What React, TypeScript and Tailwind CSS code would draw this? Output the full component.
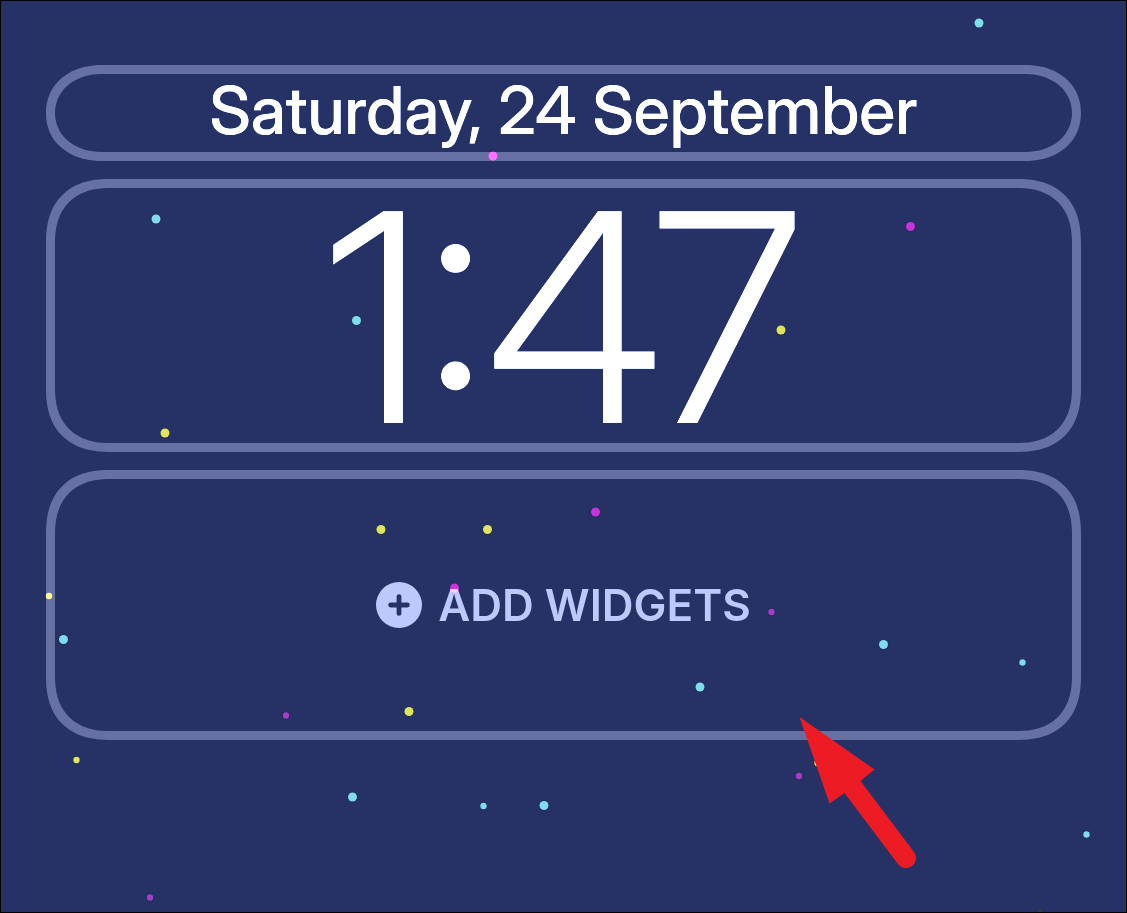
const CYAN = "#7fdcec";
const YELLOW = "#dfe45c";
const MAGENTA = "#c634da";
const PURPLE = "#a63ccb";

type Speck = [x: number, y: number, r: number, fill: string];

const specks: Speck[] = [
  [979, 23, 4.5, CYAN],
  [156, 219, 4.5, CYAN],
  [356.5, 320.5, 4.5, CYAN],
  [63.5, 639.5, 4.5, CYAN],
  [700, 687, 4.5, CYAN],
  [883.5, 644.5, 4.5, CYAN],
  [352.5, 797, 4.5, CYAN],
  [544, 805.5, 4.5, CYAN],
  [1022.5, 662.5, 3.2, CYAN],
  [483.5, 806, 3.2, CYAN],
  [1086.5, 834.5, 3.2, CYAN],
  [781, 330, 4.5, YELLOW],
  [165, 433, 4.5, YELLOW],
  [381, 529.5, 4.5, YELLOW],
  [487.5, 529.5, 4.5, YELLOW],
  [409, 711.5, 4.5, YELLOW],
  [49, 596, 3.2, YELLOW],
  [76.5, 760, 3.2, YELLOW],
  [817.5, 763, 3.2, YELLOW],
  [493, 156, 4.5, MAGENTA],
  [910.5, 226.5, 4.5, MAGENTA],
  [595.5, 512, 4.5, MAGENTA],
  [454.5, 588, 4.5, MAGENTA],
  [771.5, 612, 3.2, PURPLE],
  [286, 715.5, 3.2, PURPLE],
  [799, 776, 3.2, PURPLE],
  [150, 897.5, 3.2, PURPLE],
];

function Specks() {
  return (
    <svg
      className="pointer-events-none absolute -left-px -top-px h-full w-full overflow-visible"
      aria-hidden="true"
    >
      {specks.map(([x, y, r, fill]) => (
        <g key={`${x}-${y}`}>
          <circle cx={x} cy={y} r={r + 0.8} fill="#1c2640" opacity="0.5" />
          <circle cx={x} cy={y} r={r} fill={fill} />
        </g>
      ))}
      <circle cx="1040" cy="912" r="3" fill="#2c3d55" />
    </svg>
  );
}

function PlusBadge() {
  return (
    <svg className="size-[46px] shrink-0" viewBox="0 0 46 46" fill="currentColor" aria-hidden="true">
      <path
        fillRule="evenodd"
        d="M23 0a23 23 0 1 1 0 46a23 23 0 1 1 0-46ZM23 12.2a2.4 2.4 0 0 0-2.4 2.4v6H14.6a2.4 2.4 0 0 0 0 4.8h6v6a2.4 2.4 0 0 0 4.8 0v-6h6a2.4 2.4 0 0 0 0-4.8h-6v-6a2.4 2.4 0 0 0-2.4-2.4Z"
      />
    </svg>
  );
}

function Pointer() {
  return (
    <svg
      className="pointer-events-none absolute left-[798px] top-[715px] h-[154px] w-[120px]"
      viewBox="799 716 120 154"
      fill="#ed1c24"
      aria-hidden="true"
    >
      <path d="M799.5 717L874.5 769.5L860.5 781L914 852A10 10 0 0 1 898 864L844.5 793L829.5 803.5Z" />
    </svg>
  );
}

const panel =
  "flex w-full items-center justify-center border-[9px] border-[#403e3d] mix-blend-plus-lighter";

export default function App() {
  return (
    <main className="relative isolate min-h-screen overflow-hidden border border-black bg-[#263265] px-[45px] pt-16 font-['Inter_Display','Inter',sans-serif]">
      <Specks />
      <div className="relative flex flex-col gap-[18px] mix-blend-plus-lighter">
        <button
          type="button"
          className={`${panel} h-24 rounded-[56px/48px] pb-1.5 text-[66px] font-medium leading-none text-white [corner-shape:superellipse(1.1)]`}
        >
          Saturday, 24 September
        </button>
        <button
          type="button"
          className={`${panel} h-[273px] rounded-[64px] pt-0.5 text-[291px] font-light leading-[240px] text-white [corner-shape:superellipse(1.25)]`}
        >
          1:47
        </button>
        <button
          type="button"
          className={`${panel} h-[270px] gap-4 rounded-[64px] font-['Inter',sans-serif] text-[44px] font-semibold leading-none text-[#979797] [corner-shape:superellipse(1.25)]`}
        >
          <PlusBadge />
          ADD WIDGETS
        </button>
      </div>
      <Pointer />
    </main>
  );
}
